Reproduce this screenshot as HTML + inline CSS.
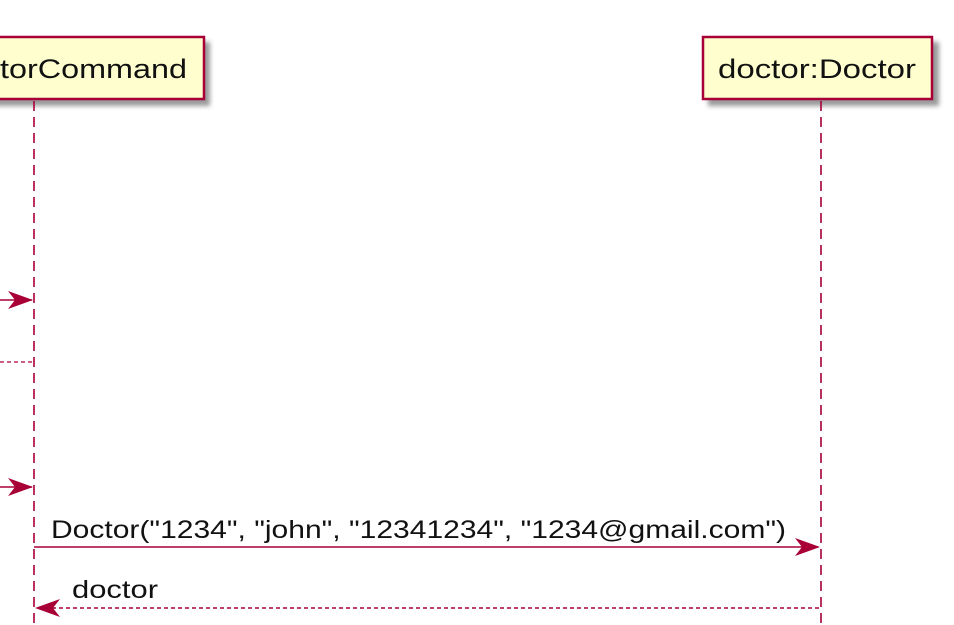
<!DOCTYPE html>
<html><head><meta charset="utf-8"><style>
html,body{margin:0;padding:0;background:#fff;}
svg{display:block;}
text{font-family:"Liberation Sans",sans-serif;fill:#111;}
</style></head><body>
<svg width="954" height="625" viewBox="0 0 954 625" xmlns="http://www.w3.org/2000/svg">
<defs>
<filter id="sh" x="-20%" y="-20%" width="140%" height="160%">
<feGaussianBlur stdDeviation="2.5"/>
</filter>
</defs>
<rect x="-20" y="42" width="230" height="64" fill="#777" opacity="0.75" filter="url(#sh)"/>
<rect x="708" y="42" width="231" height="64" fill="#777" opacity="0.75" filter="url(#sh)"/>
<rect x="-20" y="37" width="224" height="62" fill="#fefece" stroke="#a80036" stroke-width="2.5"/>
<rect x="703" y="37" width="229" height="62" fill="#fefece" stroke="#a80036" stroke-width="2.5"/>
<text x="0" y="78" font-size="27" textLength="187" lengthAdjust="spacingAndGlyphs">torCommand</text>
<text x="718" y="78" font-size="27" textLength="198" lengthAdjust="spacingAndGlyphs">doctor:Doctor</text>
<line x1="34" y1="101" x2="34" y2="625" stroke="#a80036" stroke-width="1.6" stroke-dasharray="10,6"/>
<line x1="821" y1="101" x2="821" y2="625" stroke="#a80036" stroke-width="1.6" stroke-dasharray="10,6"/>
<line x1="0" y1="300" x2="32" y2="300" stroke="#a80036" stroke-width="1.6"/>
<path d="M33 300 L8 291 L15 300 L8 309 Z" fill="#a80036"/>
<line x1="0" y1="362" x2="34" y2="362" stroke="#a80036" stroke-width="1.2" stroke-dasharray="4,3"/>
<line x1="0" y1="487" x2="32" y2="487" stroke="#a80036" stroke-width="1.6"/>
<path d="M33 487 L8 478 L15 487 L8 496 Z" fill="#a80036"/>
<text x="51" y="538" font-size="25" textLength="735" lengthAdjust="spacingAndGlyphs">Doctor("1234", "john", "12341234", "1234@gmail.com")</text>
<line x1="34" y1="547" x2="818" y2="547" stroke="#a80036" stroke-width="1.6"/>
<path d="M820 547 L795 538 L802 547 L795 556 Z" fill="#a80036"/>
<text x="72" y="598" font-size="25" textLength="86" lengthAdjust="spacingAndGlyphs">doctor</text>
<line x1="38" y1="608" x2="821" y2="608" stroke="#a80036" stroke-width="1.6" stroke-dasharray="4,3"/>
<path d="M35 608 L60 599 L53 608 L60 617 Z" fill="#a80036"/>
</svg>
</body></html>
